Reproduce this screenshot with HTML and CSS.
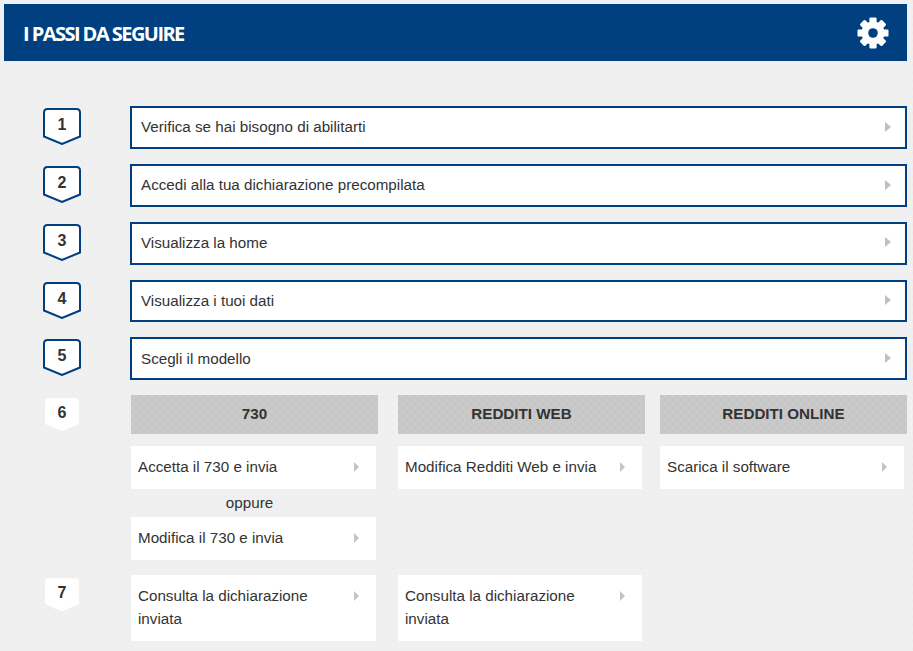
FILE: index.html
```html
<!DOCTYPE html>
<html lang="it">
<head>
<meta charset="utf-8">
<title>I passi da seguire</title>
<link rel="stylesheet" href="styles.css">
</head>
<body>
<header class="bar">
  <h1 class="bar-title">I PASSI DA SEGUIRE</h1>
  <svg class="gear" viewBox="-16 -16 32 32" aria-hidden="true">
    <g fill="#fff">
      <circle r="11.5"/>
      <rect x="-3.6" y="-15.5" width="7.2" height="31" rx="1.2"/>
      <rect x="-3.6" y="-15.5" width="7.2" height="31" rx="1.2" transform="rotate(45)"/>
      <rect x="-3.6" y="-15.5" width="7.2" height="31" rx="1.2" transform="rotate(90)"/>
      <rect x="-3.6" y="-15.5" width="7.2" height="31" rx="1.2" transform="rotate(135)"/>
    </g>
    <circle r="4.8" fill="#004080"/>
  </svg>
</header>
<main class="steps">
  <section class="step">
    <div class="marker"><div class="badge"><svg class="badge-shape" viewBox="0 0 38 37" aria-hidden="true"><path d="M4.5 1H33.5Q37 1 37 4.5V28.5L19 36L1 28.5V4.5Q1 1 4.5 1Z"/></svg><span class="badge-num">1</span></div></div>
    <a class="link">Verifica se hai bisogno di abilitarti<i class="arrow"></i></a>
  </section>
  <section class="step">
    <div class="marker"><div class="badge"><svg class="badge-shape" viewBox="0 0 38 37" aria-hidden="true"><path d="M4.5 1H33.5Q37 1 37 4.5V28.5L19 36L1 28.5V4.5Q1 1 4.5 1Z"/></svg><span class="badge-num">2</span></div></div>
    <a class="link">Accedi alla tua dichiarazione precompilata<i class="arrow"></i></a>
  </section>
  <section class="step">
    <div class="marker"><div class="badge"><svg class="badge-shape" viewBox="0 0 38 37" aria-hidden="true"><path d="M4.5 1H33.5Q37 1 37 4.5V28.5L19 36L1 28.5V4.5Q1 1 4.5 1Z"/></svg><span class="badge-num">3</span></div></div>
    <a class="link">Visualizza la home<i class="arrow"></i></a>
  </section>
  <section class="step">
    <div class="marker"><div class="badge"><svg class="badge-shape" viewBox="0 0 38 37" aria-hidden="true"><path d="M4.5 1H33.5Q37 1 37 4.5V28.5L19 36L1 28.5V4.5Q1 1 4.5 1Z"/></svg><span class="badge-num">4</span></div></div>
    <a class="link">Visualizza i tuoi dati<i class="arrow"></i></a>
  </section>
  <section class="step">
    <div class="marker"><div class="badge"><svg class="badge-shape" viewBox="0 0 38 37" aria-hidden="true"><path d="M4.5 1H33.5Q37 1 37 4.5V28.5L19 36L1 28.5V4.5Q1 1 4.5 1Z"/></svg><span class="badge-num">5</span></div></div>
    <a class="link">Scegli il modello<i class="arrow"></i></a>
  </section>

  <section class="step step-wide">
    <div class="marker marker-plain"><div class="tag">6</div></div>
    <div class="cols">
      <div class="col col-a">
        <h2 class="col-head">730</h2>
        <a class="card"><span class="card-text">Accetta il 730 e invia</span><i class="arrow arrow-sm"></i></a>
        <p class="or">oppure</p>
        <a class="card"><span class="card-text">Modifica il 730 e invia</span><i class="arrow arrow-sm"></i></a>
      </div>
      <div class="col col-b">
        <h2 class="col-head">REDDITI WEB</h2>
        <a class="card"><span class="card-text">Modifica Redditi Web e invia</span><i class="arrow arrow-sm"></i></a>
      </div>
      <div class="col col-c">
        <h2 class="col-head">REDDITI ONLINE</h2>
        <a class="card"><span class="card-text">Scarica il software</span><i class="arrow arrow-sm"></i></a>
      </div>
    </div>
  </section>

  <section class="step step-last">
    <div class="marker marker-plain"><div class="tag">7</div></div>
    <div class="cols">
      <div class="col col-a">
        <a class="card"><span class="card-text">Consulta la dichiarazione inviata</span><i class="arrow arrow-sm"></i></a>
      </div>
      <div class="col col-b">
        <a class="card"><span class="card-text">Consulta la dichiarazione inviata</span><i class="arrow arrow-sm"></i></a>
      </div>
    </div>
  </section>
</main>
</body>
</html>
```
FILE: styles.css
```css
* { box-sizing: border-box; }
html, body { margin: 0; padding: 0; }
body {
  height: 651px;
  overflow: hidden;
  padding: 4px 6px 0 4px;
  font-family: "Liberation Sans", Arial, sans-serif;
  font-size: 15.2px;
  color: #333;
  background-color: #f0f0f0;
  background-image:
    radial-gradient(circle at 1px 1px, #ebedee 0.7px, transparent 1px),
    radial-gradient(circle at 5px 5px, #ebedee 0.7px, transparent 1px);
  background-size: 8px 8px;
}
.bar {
  height: 57px;
  padding: 1px 18px 0 19px;
  background: #004080;
  display: flex;
  align-items: center;
  justify-content: space-between;
}
.bar-title {
  margin: 0;
  font-family: "Open Sans", sans-serif;
  font-size: 20px;
  font-weight: 700;
  letter-spacing: -1.55px;
  color: #fff;
}
.gear { width: 32px; height: 32px; display: block; margin-top: -1px; }
.steps { padding-top: 45.25px; }
.step {
  display: flex;
  height: 42.8px;
  margin-bottom: 15px;
}
.marker { width: 126px; flex: none; padding: 2px 0 0 39px; }
.badge { width: 38px; height: 37px; display: grid; }
.badge-shape {
  grid-area: 1 / 1;
  width: 38px;
  height: 37px;
  display: block;
  fill: #fff;
  stroke: #004080;
  stroke-width: 2;
}
.badge-num {
  grid-area: 1 / 1;
  z-index: 1;
  text-align: center;
  font-size: 16px;
  font-weight: 700;
  line-height: 34px;
  color: #333;
}
.link {
  flex: 1;
  display: flex;
  align-items: center;
  justify-content: space-between;
  padding: 0 14px 1.5px 9px;
  background: #fff;
  border: 2px solid #004080;
  color: #333;
}
.arrow {
  width: 0;
  height: 0;
  border-style: solid;
  border-width: 5px 0 5px 6px;
  border-color: transparent transparent transparent #c4bfbc;
  flex: none;
}
.arrow-sm { margin: 7px 0 0 0; border-width: 5px 0 5px 5px; border-left-color: #c4c4c4; }
.step-wide { height: auto; }
.step-last { height: auto; margin-bottom: 0; }
.marker-plain { padding: 3px 0 0 41px; }
.tag {
  width: 34px;
  height: 33px;
  background: #fff;
  clip-path: polygon(2px 0, calc(100% - 2px) 0, 100% 2px, 100% 78%, 50% 100%, 0 78%, 0 2px);
  text-align: center;
  font-size: 16px;
  font-weight: 700;
  line-height: 29px;
  color: #333;
}
.cols { display: flex; padding-left: 1px; }
.col { width: 247px; flex: none; }
.col-a { margin-right: 20px; }
.col-b { margin-right: 15px; }
.col-head {
  margin: 0 0 12px;
  height: 39px;
  line-height: 38px;
  text-align: center;
  font-size: 15.2px;
  font-weight: 700;
  color: #333;
  background-color: #c9c9c9;
  background-image:
    radial-gradient(circle at 1px 1px, #c3c3c3 0.7px, transparent 1px),
    radial-gradient(circle at 5px 5px, #c3c3c3 0.7px, transparent 1px);
  background-size: 8px 8px;
}
.card {
  display: flex;
  align-items: flex-start;
  min-height: 43px;
  margin-right: 3px;
  padding: 9px 17px 11px 7px;
  background: #fff;
  line-height: 23px;
  color: #333;
}
.col-a .card { margin-right: 2px; }
.card-text { flex: 1; padding-right: 14px; }
.or { margin: 0; height: 28px; line-height: 28px; text-align: center; padding-right: 10px; }
```
